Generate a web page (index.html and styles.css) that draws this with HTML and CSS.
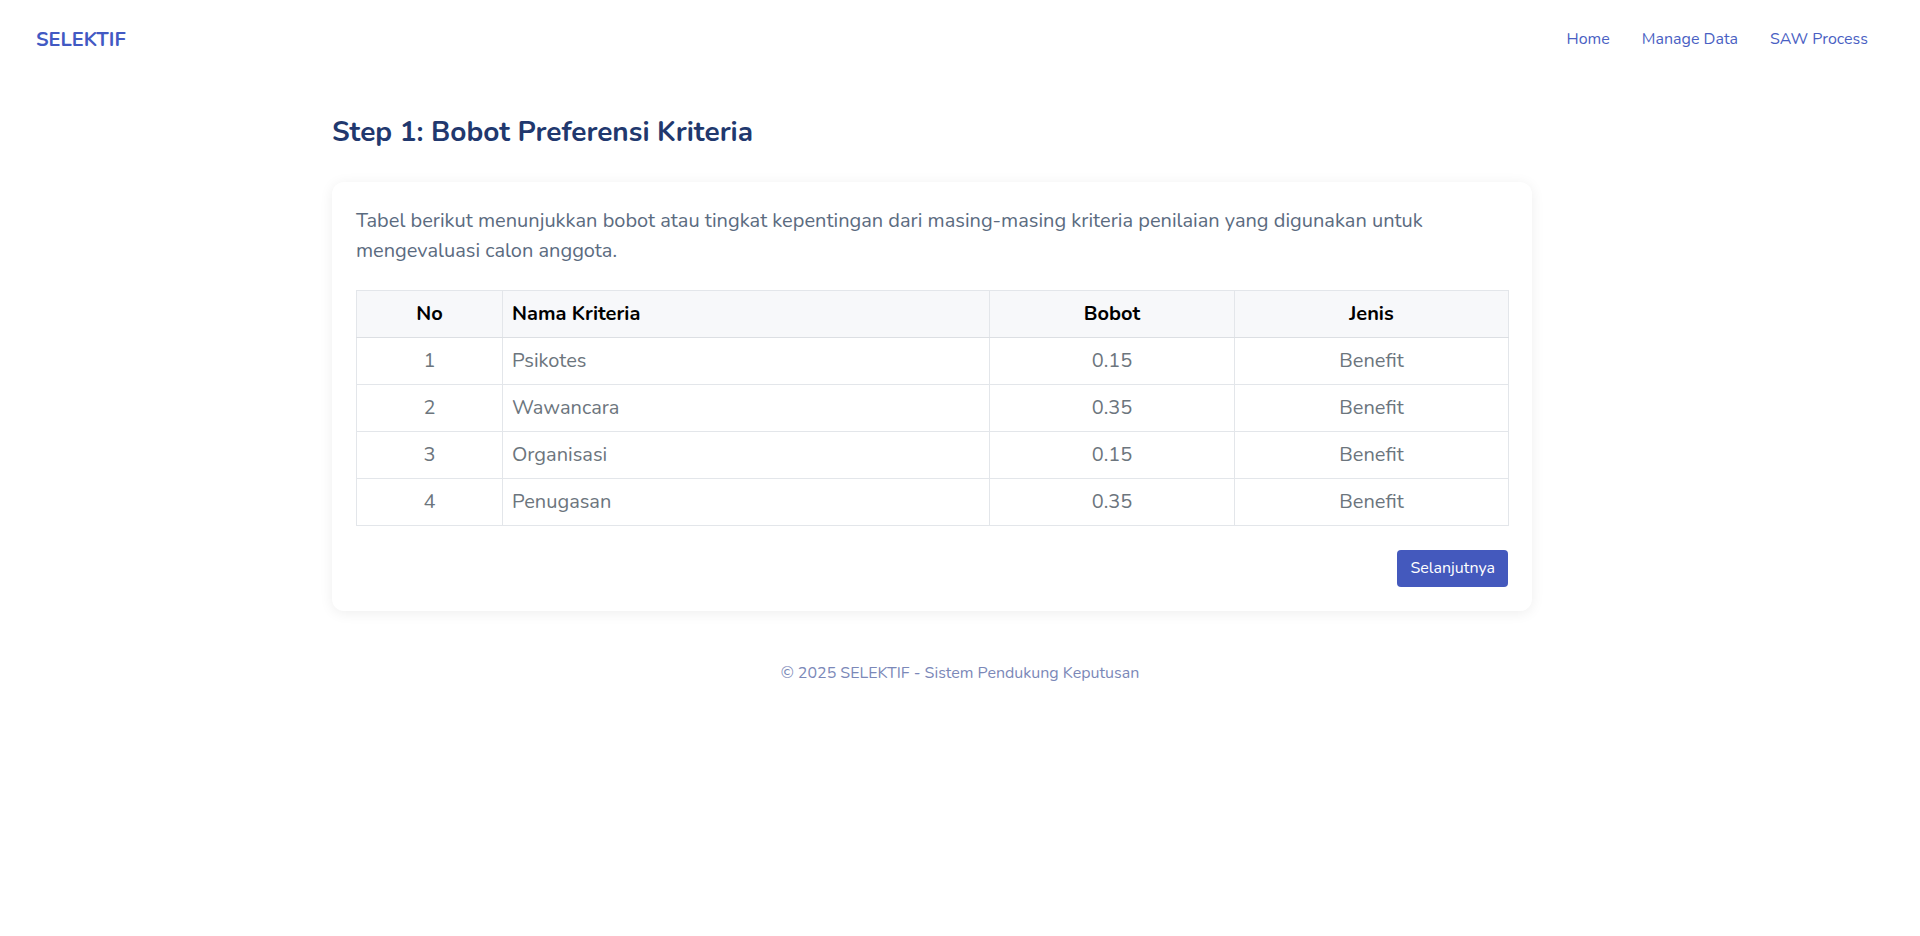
FILE: index.html
```html
<!DOCTYPE html>
<html lang="id">
<head>
<meta charset="utf-8">
<title>SELEKTIF - SAW Process</title>
<link rel="stylesheet" href="styles.css">
</head>
<body>
<header class="navbar">
  <a class="brand" href="#">SELEKTIF</a>
  <nav class="nav">
    <a href="#">Home</a>
    <a href="#">Manage Data</a>
    <a href="#">SAW Process</a>
  </nav>
</header>
<div class="page">
  <main class="container">
    <h1 class="title">Step 1: Bobot Preferensi Kriteria</h1>
    <section class="card">
      <p class="desc">Tabel berikut menunjukkan bobot atau tingkat kepentingan dari masing-masing kriteria penilaian yang digunakan untuk mengevaluasi calon anggota.</p>
      <table class="tbl">
        <colgroup>
          <col class="c-no"><col class="c-nama"><col class="c-bobot"><col class="c-jenis">
        </colgroup>
        <thead>
          <tr><th class="center">No</th><th>Nama Kriteria</th><th class="center">Bobot</th><th class="center">Jenis</th></tr>
        </thead>
        <tbody>
          <tr><td class="center">1</td><td>Psikotes</td><td class="center">0.15</td><td class="center">Benefit</td></tr>
          <tr><td class="center">2</td><td>Wawancara</td><td class="center">0.35</td><td class="center">Benefit</td></tr>
          <tr><td class="center">3</td><td>Organisasi</td><td class="center">0.15</td><td class="center">Benefit</td></tr>
          <tr><td class="center">4</td><td>Penugasan</td><td class="center">0.35</td><td class="center">Benefit</td></tr>
        </tbody>
      </table>
      <div class="actions">
        <a class="btn" href="#">Selanjutnya</a>
      </div>
    </section>
  </main>
</div>
<footer class="footer">© 2025 SELEKTIF - Sistem Pendukung Keputusan</footer>
</body>
</html>
```

FILE: styles.css
```css
* { box-sizing: border-box; }
body {
  margin: 0;
  font-family: "Nunito", "Lato", "Noto Sans", sans-serif;
  background: #ffffff;
  color: #5b6a7e;
}
a { text-decoration: none; }

.navbar {
  height: 78px;
  padding: 0 36px;
  display: flex;
  align-items: center;
  justify-content: space-between;
}
.brand {
  font-size: 20px;
  font-weight: 700;
  color: #4259c3;
}
.nav { display: flex; }
.nav a {
  padding: 8px 16px;
  font-size: 16px;
  color: #4a5fc3;
}

.page {
  display: flex;
  justify-content: center;
  padding-right: 56px;
}
.container { width: 1200px; }
.title {
  margin: 38px 0 32px;
  font-size: 28px;
  line-height: 1.2;
  font-weight: 700;
  color: #21386e;
}
.card {
  background: #fff;
  border-radius: 12px;
  padding: 24px;
  box-shadow: 0 2px 14px rgba(0, 0, 0, 0.07);
}
.desc {
  margin: 0 0 23px;
  font-size: 20px;
  line-height: 30.6px;
  color: #5b6b7f;
}
.tbl {
  width: 100%;
  border-collapse: collapse;
  table-layout: fixed;
  font-size: 20px;
}
.c-no { width: 146px; }
.c-nama { width: 487px; }
.c-bobot { width: 245px; }
.c-jenis { width: 274px; }
.tbl th, .tbl td {
  border: 1px solid #e3e6ea;
  padding: 11px 9px;
  line-height: 24px;
  text-align: left;
}
.tbl th {
  background: #f7f8fa;
  color: #000;
  font-weight: 700;
  border-bottom-color: #dcdfe3;
}
.tbl td { color: #6c757d; }
.tbl .center { text-align: center; }

.actions {
  display: flex;
  justify-content: flex-end;
  margin-top: 24px;
}
.btn {
  display: inline-block;
  background: #4459bd;
  color: #fff;
  font-size: 16px;
  line-height: 25px;
  padding: 6px 13px;
  border-radius: 4px;
}

.footer {
  padding: 50px 0 24px;
  text-align: center;
  font-size: 16px;
  line-height: 24px;
  color: #7b88b8;
}
```
